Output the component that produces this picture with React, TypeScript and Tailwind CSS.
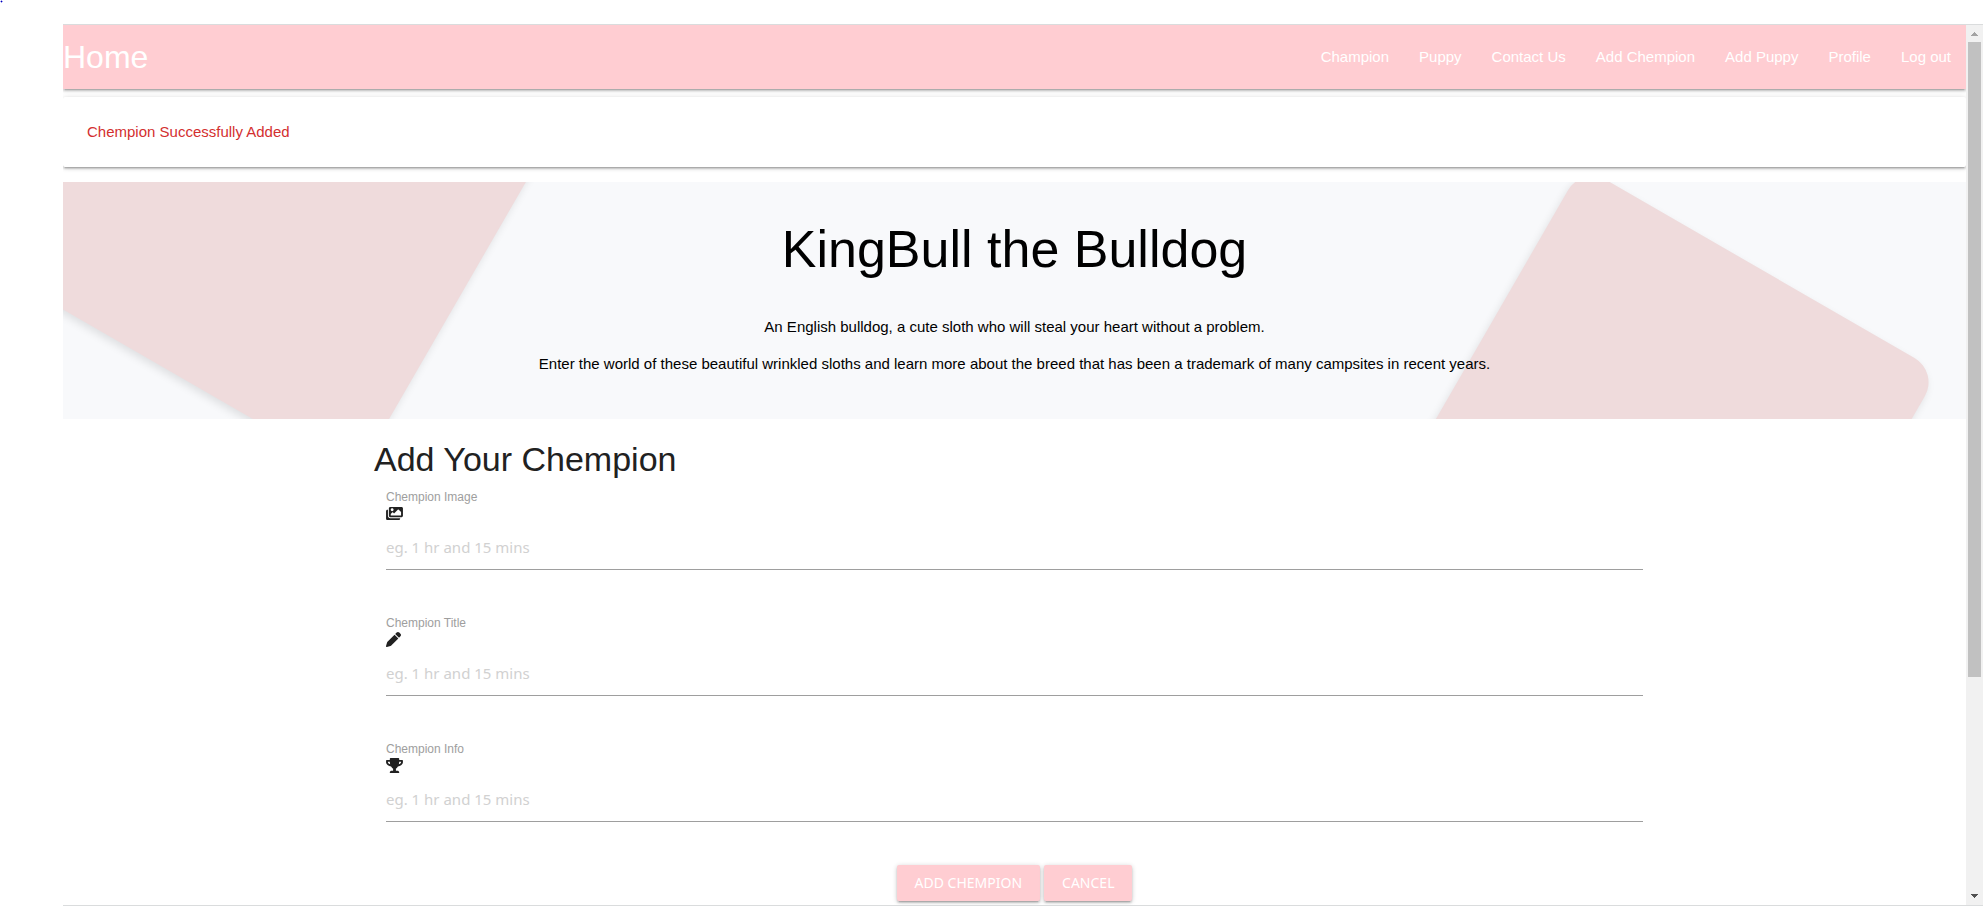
import type { ComponentType } from "react";
import { FaImages, FaTrophy } from "react-icons/fa";
import { FaPen } from "react-icons/fa6";

const navLinks = [
  "Champion",
  "Puppy",
  "Contact Us",
  "Add Chempion",
  "Add Puppy",
  "Profile",
  "Log out",
];

type Field = {
  id: string;
  label: string;
  Icon: ComponentType<{ className?: string }>;
  iconSize: string;
};

const fields: Field[] = [
  { id: "image", label: "Chempion Image", Icon: FaImages, iconSize: "h-[15px] w-[17px]" },
  { id: "title", label: "Chempion Title", Icon: FaPen, iconSize: "h-[15px] w-[15px]" },
  { id: "info", label: "Chempion Info", Icon: FaTrophy, iconSize: "h-[15px] w-[17px]" },
];

const raised =
  "shadow-[0_2px_2px_0_rgba(0,0,0,0.14),0_3px_1px_-2px_rgba(0,0,0,0.12),0_1px_5px_0_rgba(0,0,0,0.2)]";

function Navbar() {
  return (
    <nav className={`relative flex h-16 shrink-0 items-center justify-between bg-[#ffcdd2] text-white ${raised}`}>
      <a href="#home" className="text-[32px] leading-10">
        Home
      </a>
      <ul className="flex">
        {navLinks.map((name) => (
          <li key={name}>
            <a href="#" className="block px-[15px] text-[15px] leading-[64px]">
              {name}
            </a>
          </li>
        ))}
      </ul>
    </nav>
  );
}

function Hero() {
  return (
    <section className="relative h-[237px] shrink-0 overflow-hidden bg-[#f8f9fb] text-center text-black">
      <div className="absolute -top-[244px] -left-[308px] h-[540px] w-[600px] origin-bottom-right rotate-30 rounded-[28px] bg-[#efdbdc] shadow-[0_4px_8px_rgba(0,0,0,0.1)]" />
      <div className="absolute -top-4 -right-7 h-[600px] w-[412px] origin-top-left rotate-30 rounded-[28px] bg-[#efdbdc] shadow-[0_4px_8px_rgba(0,0,0,0.1)]" />
      <div className="relative flex flex-col items-center pt-[37px]">
        <h1 className="text-[52px] leading-[60px]">KingBull the Bulldog</h1>
        <p className="mt-[37px] text-[15px] leading-[22px]">
          An English bulldog, a cute sloth who will steal your heart without a problem.
        </p>
        <p className="mt-[15px] text-[15px] leading-[22px]">
          Enter the world of these beautiful wrinkled sloths and learn more about the breed that has been a
          trademark of many campsites in recent years.
        </p>
      </div>
    </section>
  );
}

function FormField({ id, label, Icon, iconSize }: Field) {
  return (
    <div className="flex flex-col items-start">
      <label htmlFor={id} className="text-xs leading-[18px] text-[#9e9e9e]">
        {label}
      </label>
      <Icon className={iconSize} />
      <input
        id={id}
        type="text"
        placeholder="eg. 1 hr and 15 mins"
        className="mt-1 h-[45px] w-full border-b border-[#9e9e9e] bg-transparent font-['Noto_Sans',sans-serif] text-[15px] outline-none placeholder:text-[#d1d1d1]"
      />
    </div>
  );
}

function ChempionForm() {
  return (
    <form className="mx-auto w-full max-w-[1281px] pt-[21px]">
      <h2 className="text-[34px] leading-[38px]">Add Your Chempion</h2>
      <div className="flex flex-col gap-11 px-3 pt-[10px]">
        {fields.map((field) => (
          <FormField key={field.id} {...field} />
        ))}
      </div>
      <div className="flex justify-center gap-1 pt-[43px] font-['Noto_Sans',sans-serif] text-sm leading-9 text-white">
        <button type="submit" className={`h-9 rounded-xs bg-[#ffcdd2] px-[18px] ${raised}`}>
          ADD CHEMPION
        </button>
        <button type="button" className={`h-9 rounded-xs bg-[#ffcdd2] px-[18px] ${raised}`}>
          CANCEL
        </button>
      </div>
    </form>
  );
}

function ScrollRail() {
  return (
    <div className="flex w-[17px] shrink-0 flex-col items-center bg-[#f1f1f1]" aria-hidden="true">
      <svg viewBox="0 0 17 17" className="h-[17px] w-[17px] shrink-0" shapeRendering="crispEdges">
        <path d="M8 7h1v1h1v1h1v1h1v1H5v-1h1V9h1V8h1z" fill="#a3a3a3" />
      </svg>
      <div className="w-full flex-1 px-0.5">
        <div className="h-3/4 bg-[#c1c1c1]" />
      </div>
      <svg viewBox="0 0 17 17" className="h-[17px] w-[17px] shrink-0" shapeRendering="crispEdges">
        <path d="M5 6h7v1h-1v1h-1v1H9v1H8V9H7V8H6V7H5z" fill="#505050" />
      </svg>
    </div>
  );
}

export default function App() {
  return (
    <div className="relative flex h-screen flex-col bg-white pt-6 pb-1 pl-[63px] font-['Liberation_Sans',Arial,sans-serif] text-[#212121]">
      <svg viewBox="0 0 3 3" className="absolute top-0 left-0 h-[3px] w-[3px]" shapeRendering="crispEdges" aria-hidden="true">
        <path d="M1 0h1v3H1zM0 1h3v1H0z" fill="#9c9cf0" />
        <path d="M1 1h1v1H1z" fill="#0000b0" />
      </svg>
      <div className="flex min-h-0 flex-1 border-y border-[#dadcdd]">
        <main className="flex min-w-0 flex-1 flex-col overflow-hidden">
          <Navbar />
          <p className={`mt-2 mb-[15px] shrink-0 rounded-xs p-6 text-[15px] leading-[22px] text-[#d32f2f] ${raised}`}>
            Chempion Successfully Added
          </p>
          <Hero />
          <ChempionForm />
        </main>
        <ScrollRail />
      </div>
    </div>
  );
}
